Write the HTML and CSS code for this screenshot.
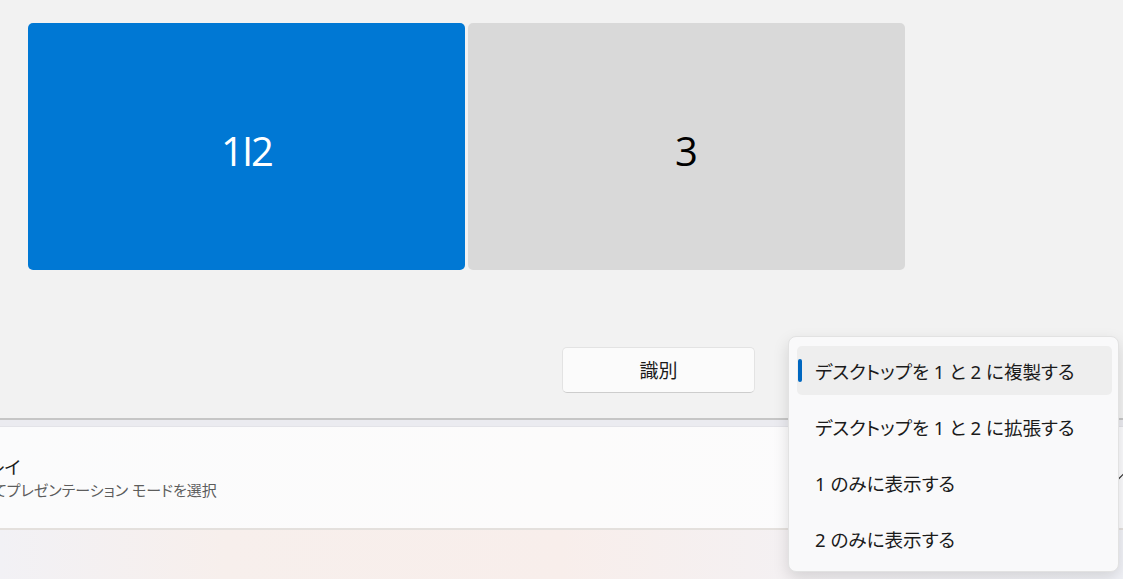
FILE: index.html
```html
<!DOCTYPE html>
<html lang="ja">
  <head>
    <meta charset="UTF-8" />
    <title>ディスプレイ</title>
    <link rel="stylesheet" href="styles.css">
  </head>
  <body>
    <div class="page">
      <section class="arrange">
        <div class="monitors">
          <div class="monitor active">1I2</div>
          <div class="monitor">3</div>
        </div>
        <div class="actions">
          <button class="identify">識別</button>
        </div>
        <ul class="menu">
          <li class="menu-item selected">デスクトップを 1 と 2 に複製する</li>
          <li class="menu-item">デスクトップを 1 と 2 に拡張する</li>
          <li class="menu-item">1 のみに表示する</li>
          <li class="menu-item">2 のみに表示する</li>
        </ul>
      </section>

      <div class="band"></div>

      <section class="card">
        <div class="card-text">
          <div class="card-title">複数のディスプレイ</div>
          <div class="card-sub">ディスプレイに対してプレゼンテーション モードを選択</div>
        </div>
        <svg class="chevron" width="12" height="12" viewBox="0 0 12 12">
          <path d="M1.5 8 L6 3.5 L10.5 8" fill="none" stroke="#333" stroke-width="1.2" />
        </svg>
      </section>

      <div class="rest"></div>
    </div>
  </body>
</html>
```

FILE: styles.css
```css
body {
  margin: 0;
  font-family: "Noto Sans", "Noto Sans CJK JP", sans-serif;
  color: #1b1b1b;
  overflow: hidden;
}

.page {
  width: 1123px;
  height: 579px;
  overflow: hidden;
  background: linear-gradient(90deg, #f2f1f5 0%, #f7efec 20%, #f8eeeb 50%, #f3f1f4 75%, #f1f2f7 100%);
}

.arrange {
  position: relative;
  height: 420px;
  box-sizing: border-box;
  padding: 23px 0 0 28px;
  background-color: #f2f2f2;
  border-bottom: 2px solid #c6c6c6;
}

.monitors {
  display: flex;
  gap: 3px;
}

.monitor {
  width: 437px;
  height: 247px;
  box-sizing: border-box;
  padding-top: 8px;
  border-radius: 5px;
  background-color: #d9d9d9;
  display: flex;
  align-items: center;
  justify-content: center;
  font-family: "Open Sans", sans-serif;
  font-size: 40px;
  color: #000;
}

.monitor.active {
  background-color: #0078d4;
  color: #fff;
  letter-spacing: -2px;
}

.actions {
  margin-top: 77px;
  padding-left: 534px;
}

.identify {
  width: 193px;
  height: 46px;
  background-color: #fbfbfb;
  border: 1px solid #e3e3e3;
  border-bottom-color: #cdcdcd;
  border-radius: 5px;
  font-family: inherit;
  font-size: 19px;
  color: #1b1b1b;
  font-feature-settings: "palt";
}

.menu {
  position: absolute;
  left: 788px;
  top: 336px;
  width: 331px;
  box-sizing: border-box;
  margin: 0;
  padding: 9px 6px 8px 8px;
  list-style: none;
  background-color: #f9f9fa;
  border: 1px solid #e2e2e2;
  border-radius: 8px;
  box-shadow: 0 6px 16px rgba(0, 0, 0, 0.13);
  display: flex;
  flex-direction: column;
  gap: 7px;
}

.menu-item {
  position: relative;
  height: 49px;
  display: flex;
  align-items: center;
  padding-left: 18px;
  border-radius: 5px;
  font-size: 18.6px;
  font-feature-settings: "palt";
  color: #1b1b1b;
}

.menu-item.selected {
  background-color: #eeeeee;
}

.menu-item.selected::before {
  content: "";
  position: absolute;
  left: 1px;
  top: 13px;
  width: 4px;
  height: 23px;
  border-radius: 2px;
  background-color: #0067c0;
}

.band {
  height: 6px;
  background-color: #ebebf0;
}

.card {
  height: 104px;
  box-sizing: border-box;
  border-top: 1px solid #e3e3e8;
  border-bottom: 2px solid #e4e0dd;
  background: linear-gradient(90deg, #fbfbfc, #fcfbfb 50%, #fbfbfd);
  display: flex;
  align-items: center;
  justify-content: space-between;
}

.card-text {
  margin-left: -127px;
  font-feature-settings: "palt";
}

.card-title {
  font-size: 18px;
  line-height: 24px;
  color: #1b1b1b;
}

.card-sub {
  font-size: 15px;
  line-height: 22px;
  color: #5d5d5d;
}

.chevron {
  margin-right: -6px;
  margin-top: -2px;
}

.rest {
  height: 50px;
}
```
